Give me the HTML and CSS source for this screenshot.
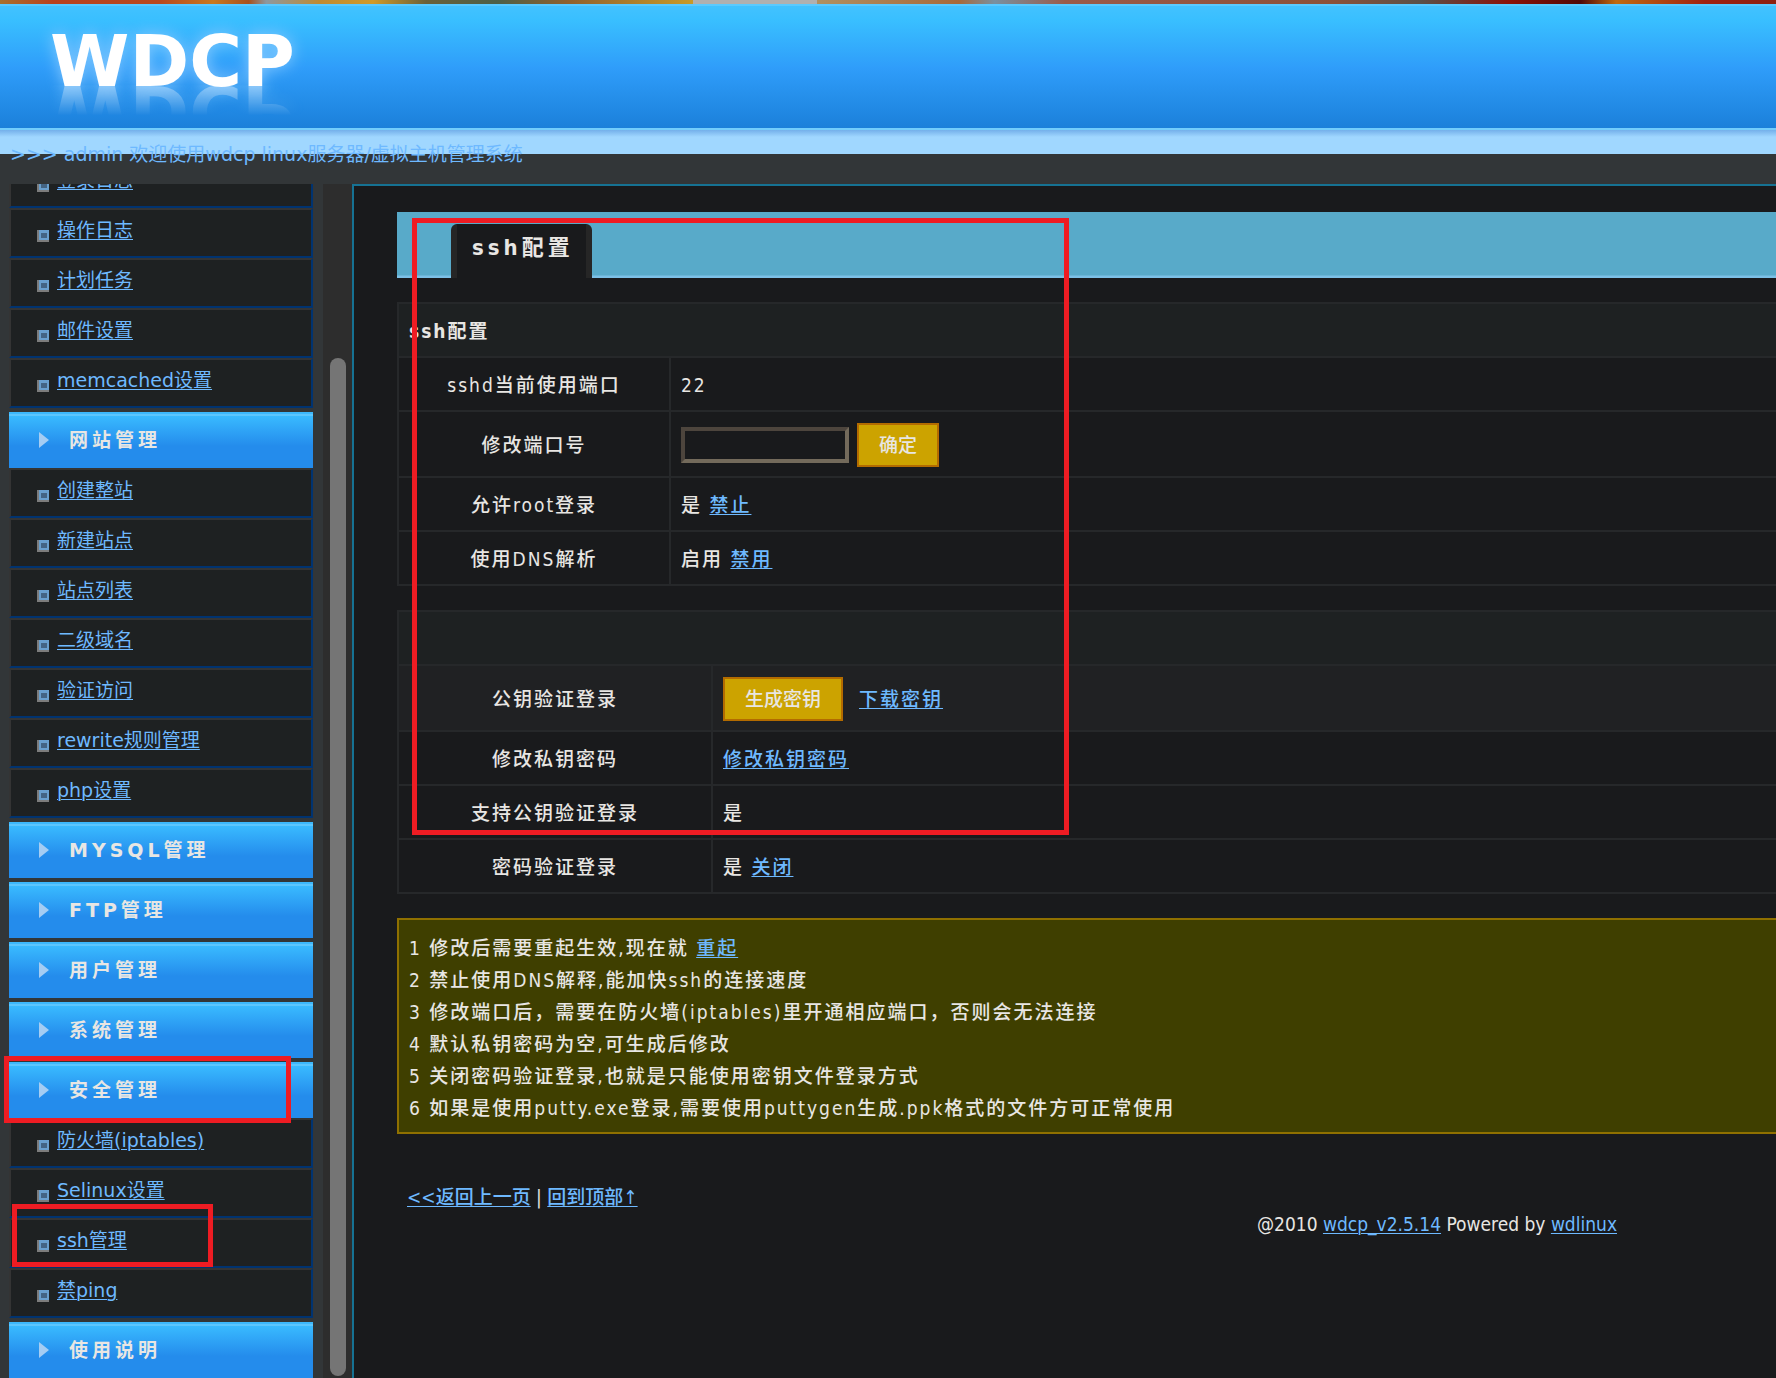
FILE: index.html
```html
<!DOCTYPE html>
<html lang="zh-CN">
<head>
<meta charset="utf-8">
<title>wdcp - ssh配置</title>
<link rel="stylesheet" href="styles.css">
</head>
<body>
<header class="banner">
  <div class="photo-strip"></div>
  <div class="masthead"><h1 class="logo">WDCP</h1></div>
  <div class="ledge"></div>
  <p class="welcome">&gt;&gt;&gt; admin 欢迎使用wdcp linux服务器/虚拟主机管理系统</p>
</header>
<div class="frames">
  <nav class="sidebar">
    <ul class="menu">
      <li class="item"><a href="#">登录日志</a></li>
      <li class="item"><a href="#">操作日志</a></li>
      <li class="item"><a href="#">计划任务</a></li>
      <li class="item"><a href="#">邮件设置</a></li>
      <li class="item"><a href="#">memcached设置</a></li>
    </ul>
    <h2 class="group">网站管理</h2>
    <ul class="menu">
      <li class="item"><a href="#">创建整站</a></li>
      <li class="item"><a href="#">新建站点</a></li>
      <li class="item"><a href="#">站点列表</a></li>
      <li class="item"><a href="#">二级域名</a></li>
      <li class="item"><a href="#">验证访问</a></li>
      <li class="item"><a href="#">rewrite规则管理</a></li>
      <li class="item"><a href="#">php设置</a></li>
    </ul>
    <h2 class="group">MYSQL管理</h2>
    <h2 class="group">FTP管理</h2>
    <h2 class="group">用户管理</h2>
    <h2 class="group">系统管理</h2>
    <h2 class="group">安全管理<span class="mark mark-group"></span></h2>
    <ul class="menu">
      <li class="item"><a href="#">防火墙(iptables)</a></li>
      <li class="item"><a href="#">Selinux设置</a></li>
      <li class="item"><a href="#">ssh管理</a><span class="mark mark-item"></span></li>
      <li class="item"><a href="#">禁ping</a></li>
    </ul>
    <h2 class="group">使用说明</h2>
  </nav>
  <div class="track"><div class="thumb"></div></div>
  <main class="main">
    <div class="tabs"><h2 class="tab">ssh配置</h2><span class="mark mark-main"></span></div>
    <table class="grid">
      <colgroup><col class="col-port"><col></colgroup>
      <thead><tr><th colspan="2">ssh配置</th></tr></thead>
      <tbody>
        <tr><td class="name">sshd当前使用端口</td><td>22</td></tr>
        <tr class="tall"><td class="name"><label for="port">修改端口号</label></td><td><div class="controls"><input id="port" type="text"><button type="button">确定</button></div></td></tr>
        <tr><td class="name">允许root登录</td><td>是 <a href="#">禁止</a></td></tr>
        <tr><td class="name">使用DNS解析</td><td>启用 <a href="#">禁用</a></td></tr>
      </tbody>
    </table>
    <table class="grid">
      <colgroup><col class="col-key"><col></colgroup>
      <thead><tr><th colspan="2"></th></tr></thead>
      <tbody>
        <tr class="tall hover"><td class="name">公钥验证登录</td><td><div class="controls wide"><button type="button">生成密钥</button><a href="#">下载密钥</a></div></td></tr>
        <tr><td class="name">修改私钥密码</td><td><a href="#">修改私钥密码</a></td></tr>
        <tr><td class="name">支持公钥验证登录</td><td>是</td></tr>
        <tr><td class="name">密码验证登录</td><td>是 <a href="#">关闭</a></td></tr>
      </tbody>
    </table>
    <div class="notes">
      <p>1 修改后需要重起生效,现在就 <a href="#">重起</a></p>
      <p>2 禁止使用DNS解释,能加快ssh的连接速度</p>
      <p>3 修改端口后，需要在防火墙(iptables)里开通相应端口，否则会无法连接</p>
      <p>4 默认私钥密码为空,可生成后修改</p>
      <p>5 关闭密码验证登录,也就是只能使用密钥文件登录方式</p>
      <p>6 如果是使用putty.exe登录,需要使用puttygen生成.ppk格式的文件方可正常使用</p>
    </div>
    <p class="back"><a href="#">&lt;&lt;返回上一页</a> | <a href="#">回到顶部↑</a></p>
    <footer class="copyright">@2010 <a href="#">wdcp_v2.5.14</a> Powered by <a href="#">wdlinux</a></footer>
  </main>
</div>
</body>
</html>
```
FILE: styles.css
```css
*, *::before { box-sizing: border-box; }
body, h1, h2, p, ul { margin: 0; padding: 0; }
body {
  display: flex;
  flex-direction: column;
  height: 100vh;
  overflow: hidden;
  background: #323638;
  color: #e8e6e3;
  font: 19px/28px "DejaVu Sans", "Noto Sans CJK SC", sans-serif;
}
a { color: #6eb9ff; text-decoration-thickness: 1px; text-underline-offset: 2px; }

/* Top frame */
.banner { flex: none; height: 184px; }
.photo-strip {
  height: 4px;
  background: linear-gradient(90deg, #a8702c, #b9401c 3%, #b8481c 9%, #c9781c 12%, #a8501c 14%, #8c98a0 15%, #c08a30 18%, #d09a28 21%, #6a6038 24%, #4c6048 28%, #90602c 32%, #c89a28 39%, #b0b0b0 39%, #b0b0b0 46%, #b09060 46%, #a86838 54%, #7890a0 56%, #9b5a48 60%, #8c5038 75%, #5a5048 80%, #8c1008 85%, #500808 89%, #c06a10 91%, #a02010 96%, #8c2010);
}
.masthead {
  height: 124px;
  padding-left: 50px;
  background: linear-gradient(#5bcaff 0, #5bcaff 2px, #42c2ff 2px, #39bfff 16px, #2f9dfa 64px, #1b80da 124px);
}
.logo {
  color: #fff;
  font-size: 72px;
  line-height: 114px;
  text-shadow: 0 0 16px #8cccff;
  -webkit-box-reflect: below -64px linear-gradient(transparent 46%, rgba(255, 255, 255, .45) 72%, transparent 73%);
}
.ledge {
  height: 26px;
  background: linear-gradient(#72cdfc 0, #72cdfc 2px, #74b0ea 2px, #a0d7ff 9px);
}
.welcome { padding-left: 10px; margin-top: -14px; line-height: 28px; color: #6eb9ff; }

/* Lower frames */
.frames { display: flex; flex: 1; min-height: 0; }
.sidebar {
  display: flex;
  flex: none;
  flex-direction: column;
  justify-content: flex-end;
  width: 323px;
  padding: 0 10px 0 9px;
  overflow: hidden;
}
.menu { flex: none; list-style: none; }
.item {
  position: relative;
  height: 50px;
  padding-left: 46px;
  border: 2px solid #343434;
  border-right-color: #003370;
  border-bottom-color: #003370;
  background: #1e2122;
  line-height: 40px;
}
.item::before {
  content: "";
  position: absolute;
  left: 26px;
  top: 20px;
  width: 12px;
  height: 12px;
  border: solid #7c7c7c;
  border-width: 0 0 2px 2px;
  background: linear-gradient(#446483, #446483) 2px 3px / 6px 5px no-repeat #6a9fcd;
}
.group {
  position: relative;
  flex: none;
  height: 56px;
  margin-top: 4px;
  padding-left: 60px;
  background: linear-gradient(#3cb8fd 0, #3cb8fd 2px, #5cc6ff 2px, #5cc6ff 4px, #39baff 4px, #248cec 34px);
  font-size: 19px;
  line-height: 56px;
  letter-spacing: 4px;
}
.group::before {
  content: "";
  position: absolute;
  left: 30px;
  top: 20px;
  border: solid transparent;
  border-width: 8px 0 8px 10px;
  border-left-color: #a5cdf3;
}
.track { flex: none; width: 29px; padding: 174px 6px 2px 7px; background: #2d2d2d; }
.thumb { height: 100%; border-radius: 8px; background: #757575; }
.main {
  flex: 1;
  min-width: 0;
  padding: 26px 0 0 43px;
  overflow: hidden;
  border: solid #167293;
  border-width: 2px 0 0 2px;
  background: #191a1c;
  font-family: "DejaVu Sans Condensed", "DejaVu Sans", "Noto Sans CJK SC", sans-serif;
  font-weight: 500;
}

/* Tab bar */
.tabs {
  position: relative;
  display: flex;
  align-items: flex-end;
  height: 66px;
  padding-left: 54px;
  background: linear-gradient(#58aac9 63px, #7cc0e6 64px);
}
.tab {
  height: 54px;
  padding: 0 12px 0 15px;
  border: solid #262626;
  border-width: 0 6px;
  border-radius: 6px 6px 0 0;
  background: #191a1c;
  font-size: 22px;
  line-height: 48px;
  letter-spacing: 4px;
}

/* Settings tables */
.grid {
  width: 100%;
  margin-top: 24px;
  border-collapse: separate;
  border-spacing: 0;
  border: solid #26282a;
  border-width: 2px 0 0 2px;
  table-layout: fixed;
  letter-spacing: 2px;
}
.grid th, .grid td { height: 54px; padding: 2px 10px 0; border-bottom: 2px solid #26282a; text-align: left; }
.grid th { background: #1e2122; }
.grid .name { border-right: 2px solid #26282a; text-align: center; }
.grid .tall td { height: 66px; }
.grid .hover { background: #202123; }
.col-port { width: 272px; }
.col-key { width: 314px; }
.controls { display: flex; align-items: center; gap: 8px; }
.controls.wide { gap: 16px; }
input {
  width: 168px;
  height: 36px;
  border: 4px solid;
  border-color: #4d453d #736a5b #736a5b #4d453d;
  background: #191a1c;
  color: inherit;
  font: inherit;
}
button {
  height: 44px;
  padding: 0 20px;
  border: 2px solid #b36b00;
  background: #cca300;
  color: #e8e6e3;
  font: inherit;
  letter-spacing: 0;
}
.notes {
  margin-top: 24px;
  padding: 12px 10px 8px;
  border: 2px solid #8f7000;
  border-right: 0;
  background: #3f3f00;
  line-height: 32px;
  letter-spacing: 2px;
}
.back { margin-top: 49px; padding-left: 10px; }
.copyright { padding-right: 159px; text-align: right; line-height: 26px; }

/* Red annotation frames */
.mark { position: absolute; z-index: 1; border: 5px solid #ee1c23; }
.mark-group { left: -5px; top: -6px; width: 287px; height: 67px; }
.mark-item { left: 1px; top: -16px; width: 201px; height: 63px; }
.mark-main { left: 15px; top: 6px; width: 657px; height: 617px; }
```
